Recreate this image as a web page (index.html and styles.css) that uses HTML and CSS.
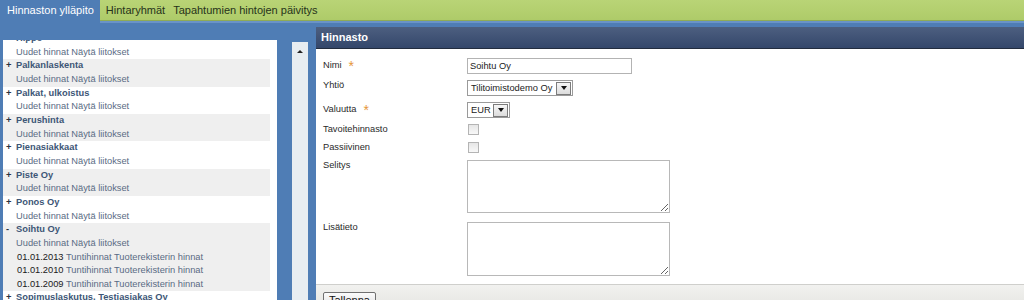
FILE: index.html
```html
<!DOCTYPE html>
<html lang="fi">
<head>
  <meta charset="UTF-8" />
  <title>Hinnaston ylläpito</title>
  <link rel="stylesheet" href="styles.css">
</head>
<body>

  <div class="tabs">
    <a class="tab active">Hinnaston ylläpito</a>
    <div class="tabbar">
      <a class="tab">Hintaryhmät</a>
      <a class="tab">Tapahtumien hintojen päivitys</a>
    </div>
  </div>

  <div class="main">
    <div class="sidebar">
      <div class="list">
        <div class="items">
          <div class="item">
            <div class="name"><span class="sign">+</span>Hippo</div>
            <div class="links"><a>Uudet hinnat</a> <a>Näytä liitokset</a></div>
          </div>
          <div class="item">
            <div class="name"><span class="sign">+</span>Palkanlaskenta</div>
            <div class="links"><a>Uudet hinnat</a> <a>Näytä liitokset</a></div>
          </div>
          <div class="item">
            <div class="name"><span class="sign">+</span>Palkat, ulkoistus</div>
            <div class="links"><a>Uudet hinnat</a> <a>Näytä liitokset</a></div>
          </div>
          <div class="item">
            <div class="name"><span class="sign">+</span>Perushinta</div>
            <div class="links"><a>Uudet hinnat</a> <a>Näytä liitokset</a></div>
          </div>
          <div class="item">
            <div class="name"><span class="sign">+</span>Pienasiakkaat</div>
            <div class="links"><a>Uudet hinnat</a> <a>Näytä liitokset</a></div>
          </div>
          <div class="item">
            <div class="name"><span class="sign">+</span>Piste Oy</div>
            <div class="links"><a>Uudet hinnat</a> <a>Näytä liitokset</a></div>
          </div>
          <div class="item">
            <div class="name"><span class="sign">+</span>Ponos Oy</div>
            <div class="links"><a>Uudet hinnat</a> <a>Näytä liitokset</a></div>
          </div>
          <div class="item">
            <div class="name"><span class="sign">-</span>Soihtu Oy</div>
            <div class="links"><a>Uudet hinnat</a> <a>Näytä liitokset</a></div>
            <div class="date"><span class="day">01.01.2013</span> <a>Tuntihinnat</a> <a>Tuoterekisterin hinnat</a></div>
            <div class="date"><span class="day">01.01.2010</span> <a>Tuntihinnat</a> <a>Tuoterekisterin hinnat</a></div>
            <div class="date"><span class="day">01.01.2009</span> <a>Tuntihinnat</a> <a>Tuoterekisterin hinnat</a></div>
          </div>
          <div class="item">
            <div class="name"><span class="sign">+</span>Sopimuslaskutus, Testiasiakas Oy</div>
            <div class="links"><a>Uudet hinnat</a> <a>Näytä liitokset</a></div>
          </div>
        </div>
      </div>
      <div class="scroll"><span class="up"></span></div>
    </div>

    <div class="panel">
      <div class="panel-head">Hinnasto</div>
      <div class="form">
        <div class="row">
          <label>Nimi<span class="req">*</span></label>
          <input type="text" class="field text" value="Soihtu Oy" />
        </div>
        <div class="row">
          <label>Yhtiö</label>
          <div class="field select wide"><span class="val">Tilitoimistodemo Oy</span><span class="drop"></span></div>
        </div>
        <div class="row">
          <label>Valuutta<span class="req">*</span></label>
          <div class="field select small"><span class="val">EUR</span><span class="drop"></span></div>
        </div>
        <div class="row check">
          <label>Tavoitehinnasto</label>
          <input type="checkbox" class="field box" />
        </div>
        <div class="row check">
          <label>Passiivinen</label>
          <input type="checkbox" class="field box" />
        </div>
        <div class="row area">
          <label>Selitys</label>
          <textarea class="field memo"></textarea>
        </div>
        <div class="row last">
          <label>Lisätieto</label>
          <textarea class="field memo tall"></textarea>
        </div>
      </div>
      <div class="panel-foot">
        <button class="save">Tallenna</button>
      </div>
    </div>
  </div>

</body>
</html>
```

FILE: styles.css
```css
body {
  margin: 0;
  height: 300px;
  overflow: hidden;
  background-color: #4f7db5;
  font-family: "Liberation Sans", Arial, sans-serif;
  font-size: 9.3px;
  color: #222;
}
a {
  cursor: pointer;
}

/* top tabs */
.tabs {
  display: flex;
  height: 21px;
}
.tab {
  font-size: 11px;
  line-height: 20px;
  padding: 0 4px;
  color: #26331a;
  white-space: nowrap;
}
.tab.active {
  color: white;
  padding: 0 6px 0 7px;
}
.tabbar {
  flex: 1;
  display: flex;
  padding-left: 2px;
  background: linear-gradient(#b9d476, #aecb69);
  border-bottom: 1px solid #8fab55;
  box-shadow: 0 2px 0 #6a93c7;
}

/* left list */
.main {
  display: flex;
  height: 279px;
}
.sidebar {
  width: 316px;
  display: flex;
  padding: 19px 0 0 3px;
  box-sizing: border-box;
}
.list {
  width: 274px;
  background: white;
  overflow: hidden;
}
.items {
  width: 267px;
  margin-top: -8px;
}
.item {
  padding-left: 3px;
  line-height: 13.65px;
}
.item:nth-child(even) {
  background: #efefef;
}
.name {
  font-weight: bold;
  color: #3d5676;
  white-space: nowrap;
}
.sign {
  display: inline-block;
  width: 10px;
  color: #2a3340;
}
.links {
  padding-left: 10px;
  color: #5a6b84;
}
.date {
  padding-left: 11px;
  color: #5a6b84;
}
.day {
  color: #1a1a1a;
}
.scroll {
  width: 16px;
  margin: 2px 0 0 15px;
  background: #e8edf1;
  display: flex;
  justify-content: center;
}
.up {
  margin-top: 8px;
  width: 0;
  height: 0;
  border-left: 3px solid transparent;
  border-right: 3px solid transparent;
  border-bottom: 3px solid #222;
}

/* right panel */
.panel {
  flex: 1;
  margin-top: 6px;
  background: white;
  display: flex;
  flex-direction: column;
}
.panel-head {
  height: 21px;
  line-height: 21px;
  padding-left: 5px;
  font-size: 11px;
  font-weight: bold;
  color: white;
  background: linear-gradient(#4d5f80, #34476b);
  border-bottom: 1px solid #222c3e;
}
.form {
  padding: 8px 7px 8px 7px;
}
.row {
  display: flex;
  align-items: flex-start;
  margin-bottom: 5px;
}
.row.check {
  margin-bottom: 6px;
}
.row.area {
  margin-bottom: 8px;
}
.row.last {
  margin-bottom: 0;
}
label {
  width: 144px;
  flex: none;
  line-height: 12px;
  color: #2a2a2a;
}
.req {
  color: #e5973a;
  font-size: 14px;
  line-height: 12px;
  margin-left: 7px;
  position: relative;
  top: 3px;
}
.field {
  margin: 1px 0 0 0;
  box-sizing: border-box;
  font-family: inherit;
  font-size: 9.3px;
}
.text {
  width: 165px;
  height: 16px;
  padding: 0 2px;
  border: 1px solid #b3b3b3;
  color: #222;
}
.select {
  height: 16px;
  display: flex;
  align-items: center;
  border: 1px solid #9a9a9a;
  background: white;
}
.select.wide {
  width: 106px;
}
.select.small {
  width: 43px;
}
.val {
  flex: 1;
  padding-left: 3px;
  line-height: 14px;
}
.drop {
  width: 15px;
  height: 13px;
  margin-right: 1px;
  box-sizing: border-box;
  border: 1px solid #7c7c7c;
  background: linear-gradient(#f6f6f6, #dcdcdc);
  display: flex;
  align-items: center;
  justify-content: center;
}
.drop::after {
  content: "";
  border-left: 3.5px solid transparent;
  border-right: 3.5px solid transparent;
  border-top: 4px solid #111;
}
.box {
  appearance: none;
  width: 11px;
  height: 11px;
  margin-left: 1px;
  border: 1px solid #b4b4b4;
  background: linear-gradient(#e6e6e6, #f8f8f8);
}
.memo {
  width: 203px;
  height: 53px;
  border: 1px solid #b8b8b8;
}
.memo.tall {
  height: 54px;
}
.panel-foot {
  flex: 1;
  border-top: 1px solid #cfcfcc;
  background: linear-gradient(#f1f1ef, #e2e2de);
  padding: 7px 7px;
}
.save {
  font-family: inherit;
  font-size: 11px;
  padding: 1px 5px;
  border: 1px solid #707070;
  border-radius: 2px;
  background: linear-gradient(#fbfbfb, #e1e1e1);
  color: #111;
}
```
